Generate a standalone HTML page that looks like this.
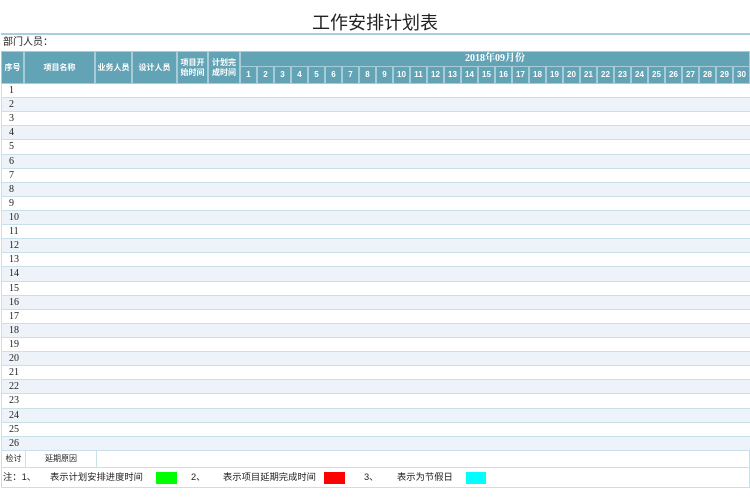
<!DOCTYPE html>
<html><head><meta charset="utf-8"><style>
*{margin:0;padding:0;box-sizing:border-box}
body{width:750px;height:501px;background:#fff;font-family:"Liberation Sans","Noto Sans CJK SC",sans-serif;position:relative;overflow:hidden;color:#222}
.title{position:absolute;left:0;width:750px;top:12px;text-align:center;font-size:18px;line-height:22px;color:#222}
.tline{position:absolute;left:1px;width:749px;top:33px;height:2px;background:#a8cfdb}
.dept{position:absolute;left:3px;top:37px;font-size:10px;line-height:12px}
.h{position:absolute;background:#62a3b6;color:#fff;font-weight:bold;font-size:8px;display:flex;align-items:center;justify-content:center;text-align:center;line-height:10px;border:1px solid #a6ccd8}
.rows{position:absolute;left:1px;top:84px;width:749px;border-left:1px solid #c8e0e8}
.r{height:14.12px;border-bottom:1px solid #c8e0e8;font-size:10px;line-height:13px;padding-left:7px;font-family:"Liberation Serif",serif}
.r:nth-child(even){background:#edf3f8}
.foot{position:absolute;left:1px;width:749px;border:1px solid #c8e0e8;font-size:8px}
.leg{position:absolute;top:471px;font-size:9.3px;line-height:12px}
.sw{position:absolute;top:472px;height:12px;width:21px}
</style></head><body>
<div class="title">工作安排计划表</div>
<div class="tline"></div>
<div class="dept">部门人员：</div>

<div class="h" style="left:1px;top:51px;width:23px;height:33px">序号</div>
<div class="h" style="left:24px;top:51px;width:71px;height:33px">项目名称</div>
<div class="h" style="left:95px;top:51px;width:37px;height:33px">业务人员</div>
<div class="h" style="left:132px;top:51px;width:45px;height:33px">设计人员</div>
<div class="h" style="left:177px;top:51px;width:31px;height:33px">项目开<br>始时间</div>
<div class="h" style="left:208px;top:51px;width:32px;height:33px">计划完<br>成时间</div>
<div class="h" style="left:240px;top:51px;width:510px;height:16px;font-size:10px;font-family:'Liberation Serif','Noto Serif CJK SC',serif">2018年09月份</div>
<div style="position:absolute;left:240px;top:66px;width:510px;height:18px;display:flex">
<div class="h" style="position:static;flex:1">1</div><div class="h" style="position:static;flex:1">2</div><div class="h" style="position:static;flex:1">3</div><div class="h" style="position:static;flex:1">4</div><div class="h" style="position:static;flex:1">5</div><div class="h" style="position:static;flex:1">6</div><div class="h" style="position:static;flex:1">7</div><div class="h" style="position:static;flex:1">8</div><div class="h" style="position:static;flex:1">9</div><div class="h" style="position:static;flex:1">10</div><div class="h" style="position:static;flex:1">11</div><div class="h" style="position:static;flex:1">12</div><div class="h" style="position:static;flex:1">13</div><div class="h" style="position:static;flex:1">14</div><div class="h" style="position:static;flex:1">15</div><div class="h" style="position:static;flex:1">16</div><div class="h" style="position:static;flex:1">17</div><div class="h" style="position:static;flex:1">18</div><div class="h" style="position:static;flex:1">19</div><div class="h" style="position:static;flex:1">20</div><div class="h" style="position:static;flex:1">21</div><div class="h" style="position:static;flex:1">22</div><div class="h" style="position:static;flex:1">23</div><div class="h" style="position:static;flex:1">24</div><div class="h" style="position:static;flex:1">25</div><div class="h" style="position:static;flex:1">26</div><div class="h" style="position:static;flex:1">27</div><div class="h" style="position:static;flex:1">28</div><div class="h" style="position:static;flex:1">29</div><div class="h" style="position:static;flex:1">30</div>
</div>

<div class="rows">
<div class="r">1</div><div class="r">2</div><div class="r">3</div><div class="r">4</div><div class="r">5</div><div class="r">6</div><div class="r">7</div><div class="r">8</div><div class="r">9</div><div class="r">10</div><div class="r">11</div><div class="r">12</div><div class="r">13</div><div class="r">14</div><div class="r">15</div><div class="r">16</div><div class="r">17</div><div class="r">18</div><div class="r">19</div><div class="r">20</div><div class="r">21</div><div class="r">22</div><div class="r">23</div><div class="r">24</div><div class="r">25</div><div class="r">26</div>
</div>

<div class="foot" style="top:451px;height:17px;border-top:none">
<div style="position:absolute;left:0;width:24px;height:16px;border-right:1px solid #c8e0e8;text-align:center;line-height:15px">检讨</div>
<div style="position:absolute;left:24px;width:71px;height:16px;border-right:1px solid #c8e0e8;text-align:center;line-height:15px">延期原因</div>
</div>
<div class="foot" style="top:467px;height:21px;border-top:none"></div>
<div class="leg" style="left:3px">注：1、</div>
<div class="leg" style="left:50px">表示计划安排进度时间</div>
<div class="sw" style="left:156px;background:#00ff00"></div>
<div class="leg" style="left:191px">2、</div>
<div class="leg" style="left:223px">表示项目延期完成时间</div>
<div class="sw" style="left:324px;background:#ff0000"></div>
<div class="leg" style="left:364px">3、</div>
<div class="leg" style="left:397px">表示为节假日</div>
<div class="sw" style="left:466px;width:20px;background:#00ffff"></div>
</body></html>
